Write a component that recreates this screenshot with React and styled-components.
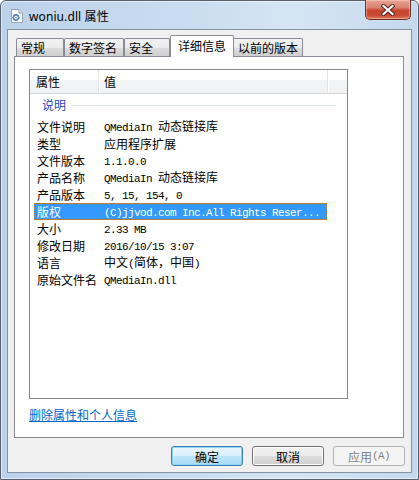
import React from 'react';
import styled, { createGlobalStyle } from 'styled-components';

const Global = createGlobalStyle`
  html, body { margin: 0; padding: 0; background: #fff; }
  body {
    width: 419px; height: 480px; overflow: hidden;
    font-family: "Noto Sans CJK SC", "Noto Sans", sans-serif;
    font-size: 12px;
  }
  * { box-sizing: border-box; }
`;

const Window = styled.div`
  width: 419px;
  height: 480px;
  border: 1px solid #56606e;
  border-radius: 6px 6px 0 0;
  background: linear-gradient(to right, #bcd2ea 0%, #cadcf0 45%, #d6e5f4 70%, #c4d8ed 100%);
  display: flex;
  flex-direction: column;
  padding: 0 6px 6px 6px;
  box-shadow: inset 0 0 0 1px rgba(255, 255, 255, 0.55);
`;

const TitleBar = styled.div`
  height: 28px;
  display: flex;
  align-items: flex-start;
`;

const TitleLeft = styled.div`
  display: flex;
  align-items: center;
  gap: 6px;
  height: 100%;
  padding: 2px 0 0 4px;
`;

const TitleText = styled.span`
  font-family: "Noto Sans", "Noto Sans CJK SC", sans-serif;
  font-size: 12px;
  color: #000;
  letter-spacing: 0.1px;
`;

const CloseButton = styled.div`
  margin-left: auto;
  margin-right: 1px;
  margin-top: -1px;
  width: 46px;
  height: 20px;
  border: 1px solid #6e3128;
  border-top: none;
  border-radius: 0 0 5px 5px;
  background: linear-gradient(to bottom, #e8a597 0%, #d9806d 40%, #c7452f 55%, #c94a33 80%, #de7c5d 100%);
  box-shadow: inset 0 0 0 1px rgba(255, 210, 200, 0.45);
  display: flex;
  align-items: center;
  justify-content: center;
`;

const Client = styled.div`
  flex: 1;
  border: 1px solid #8393a6;
  background: #f0f0f0;
  display: flex;
  flex-direction: column;
  padding: 5px 7px 6px 6px;
`;

const TabRow = styled.div`
  height: 22px;
  display: flex;
  align-items: flex-end;
  padding-left: 2px;
  position: relative;
  z-index: 1;
`;

const Tab = styled.div`
  width: ${p => p.$w}px;
  height: ${p => (p.$active ? 22 : 18)}px;
  margin-bottom: ${p => (p.$active ? 0 : 1)}px;
  margin-left: ${p => (p.$overlap ? -1 : 0)}px;
  border: 1px solid #898c95;
  border-bottom: none;
  border-radius: 2px 2px 0 0;
  background: ${p => (p.$active ? '#fff' : 'linear-gradient(to bottom, #f3f3f3 0%, #ebebeb 50%, #dddddd 50%, #cfcfcf 100%)')};
  padding-left: ${p => (p.$active ? 7 : 4)}px;
  padding-bottom: ${p => (p.$active ? 3 : 0)}px;
  display: flex;
  align-items: center;
  font-size: 12px;
  color: #000;
  white-space: nowrap;
`;

const Panel = styled.div`
  flex: 1;
  margin-top: -1px;
  border: 1px solid #898c95;
  background: #fff;
  display: flex;
  flex-direction: column;
  padding: 12px 0 0 14px;
`;

const ListView = styled.div`
  width: 319px;
  height: 330px;
  border: 1px solid #828790;
  background: #fff;
  display: flex;
  flex-direction: column;
`;

const Header = styled.div`
  height: 24px;
  display: flex;
  border-bottom: 1px solid #d5d5d5;
  background: linear-gradient(to bottom, #ffffff 0%, #ffffff 42%, #f3f4f6 45%, #f1f2f4 100%);
`;

const HeaderCell = styled.div`
  width: ${p => (p.$w ? `${p.$w}px` : 'auto')};
  flex: ${p => (p.$w ? 'none' : '1')};
  border-right: ${p => (p.$last ? 'none' : '1px solid #e2e4e7')};
  box-shadow: ${p => (p.$last ? 'none' : '1px 0 0 #ffffff')};
  padding-left: ${p => p.$pl || 0}px;
  display: flex;
  align-items: center;
  padding-bottom: 1px;
  color: #000;
`;

const GroupRow = styled.div`
  height: 24px;
  display: flex;
  align-items: center;
  padding: 0 11px 3px 12px;
`;

const GroupLabel = styled.span`
  color: #2449b6;
`;

const GroupLine = styled.div`
  flex: 1;
  height: 1px;
  background: #dfe6ee;
  margin-left: 5px;
  margin-top: 1px;
`;

const Row = styled.div`
  width: 293px;
  height: 17px;
  margin-left: 4px;
  display: flex;
  align-items: center;
  background: ${p => (p.$selected ? '#3399ff' : 'transparent')};
  color: ${p => (p.$selected ? '#fff' : '#000')};
  outline: ${p => (p.$selected ? '1px dotted #c57a2a' : 'none')};
  outline-offset: -1px;
  white-space: pre;
`;

const NameCell = styled.div`
  width: 70px;
  padding-left: 3px;
  line-height: 17px;
`;

const ValueCell = styled.div`
  flex: 1;
  line-height: 17px;
  overflow: hidden;
`;

const Ascii = styled.span`
  font-family: "Liberation Mono", "DejaVu Sans Mono", monospace;
  font-size: 11px;
  letter-spacing: -0.6px;
`;

const Link = styled.a`
  margin-top: 8px;
  color: #0066cc;
  text-decoration: underline;
  line-height: 16px;
  font-size: 12px;
  align-self: flex-start;
  cursor: pointer;
`;

const ButtonRow = styled.div`
  display: flex;
  justify-content: flex-end;
  gap: 9px;
  margin-top: 8px;
  margin-right: -1px;
`;

const Button = styled.div`
  width: 72px;
  height: 20px;
  border-radius: 3px;
  display: flex;
  align-items: center;
  justify-content: center;
  font-size: 12px;
  border: 1px solid ${p => (p.$variant === 'default' ? '#3c7fb1' : p.$variant === 'disabled' ? '#adb2b5' : '#707070')};
  color: ${p => (p.$variant === 'disabled' ? '#838383' : '#000')};
  background: ${p =>
    p.$variant === 'default'
      ? 'linear-gradient(to bottom, #eaf6fd 0%, #d9f0fc 50%, #bee6fd 50%, #a7d9f5 100%)'
      : p.$variant === 'disabled'
      ? '#f4f4f4'
      : 'linear-gradient(to bottom, #f2f2f2 0%, #ebebeb 50%, #dddddd 50%, #cfcfcf 100%)'};
  box-shadow: ${p =>
    p.$variant === 'default'
      ? 'inset 0 0 0 1px #8fd4f5'
      : p.$variant === 'disabled'
      ? 'none'
      : 'inset 0 0 0 1px #fcfcfc'};
`;

function Mixed({ text }) {
  return text
    .split(/([\x00-\x7f]+)/)
    .filter(Boolean)
    .map((s, i) =>
      /^[\x00-\x7f]+$/.test(s) ? <Ascii key={i}>{s}</Ascii> : <span key={i}>{s}</span>
    );
}

const FileIcon = () => (
  <svg width="12" height="14" viewBox="0 0 12 14">
    <path d="M0.5 0.5 H8 L11.5 4 V13.5 H0.5 Z" fill="#fbfcfd" stroke="#98a2ae" />
    <path d="M8 0.5 V4 H11.5" fill="#e3e8ee" stroke="#98a2ae" />
    <circle cx="5" cy="8.5" r="2.6" fill="none" stroke="#5d86b8" strokeWidth="1.6" />
    <circle cx="5" cy="8.5" r="0.8" fill="#5d86b8" />
    <path d="M5 5 V6 M5 11 V12 M1.5 8.5 H2.5 M7.5 8.5 H8.5" stroke="#5d86b8" strokeWidth="1.2" />
  </svg>
);

const CloseX = () => (
  <svg width="14" height="12" viewBox="0 0 14 12">
    <path d="M2.5 2 L11.5 10 M11.5 2 L2.5 10" stroke="#4a2320" strokeWidth="4" strokeLinecap="square" />
    <path d="M2.5 2 L11.5 10 M11.5 2 L2.5 10" stroke="#ffffff" strokeWidth="2.2" strokeLinecap="square" />
  </svg>
);

const tabs = [
  { label: '常规', w: 48 },
  { label: '数字签名', w: 60 },
  { label: '安全', w: 46 },
  { label: '详细信息', w: 64, active: true },
  { label: '以前的版本', w: 70, overlap: true },
];

const rows = [
  ['文件说明', 'QMediaIn 动态链接库'],
  ['类型', '应用程序扩展'],
  ['文件版本', '1.1.0.0'],
  ['产品名称', 'QMediaIn 动态链接库'],
  ['产品版本', '5, 15, 154, 0'],
  ['版权', '(C)jjvod.com Inc.All Rights Reser...', true],
  ['大小', '2.33 MB'],
  ['修改日期', '2016/10/15 3:07'],
  ['语言', '中文(简体，中国)'],
  ['原始文件名', 'QMediaIn.dll'],
];

export default function App() {
  return (
    <>
      <Global />
      <Window>
        <TitleBar>
          <TitleLeft>
            <FileIcon />
            <TitleText>woniu.dll 属性</TitleText>
          </TitleLeft>
          <CloseButton>
            <CloseX />
          </CloseButton>
        </TitleBar>
        <Client>
          <TabRow>
            {tabs.map(t => (
              <Tab key={t.label} $w={t.w} $active={t.active} $overlap={t.overlap}>
                {t.label}
              </Tab>
            ))}
          </TabRow>
          <Panel>
            <ListView>
              <Header>
                <HeaderCell $w={69} $pl={6}>属性</HeaderCell>
                <HeaderCell $w={229} $pl={5}>值</HeaderCell>
                <HeaderCell $last />
              </Header>
              <GroupRow>
                <GroupLabel>说明</GroupLabel>
                <GroupLine />
              </GroupRow>
              {rows.map(([name, value, sel]) => (
                <Row key={name} $selected={sel}>
                  <NameCell>{name}</NameCell>
                  <ValueCell>
                    <Mixed text={value} />
                  </ValueCell>
                </Row>
              ))}
            </ListView>
            <Link>删除属性和个人信息</Link>
          </Panel>
          <ButtonRow>
            <Button $variant="default">确定</Button>
            <Button>取消</Button>
            <Button $variant="disabled">
              <Mixed text="应用(A)" />
            </Button>
          </ButtonRow>
        </Client>
      </Window>
    </>
  );
}
